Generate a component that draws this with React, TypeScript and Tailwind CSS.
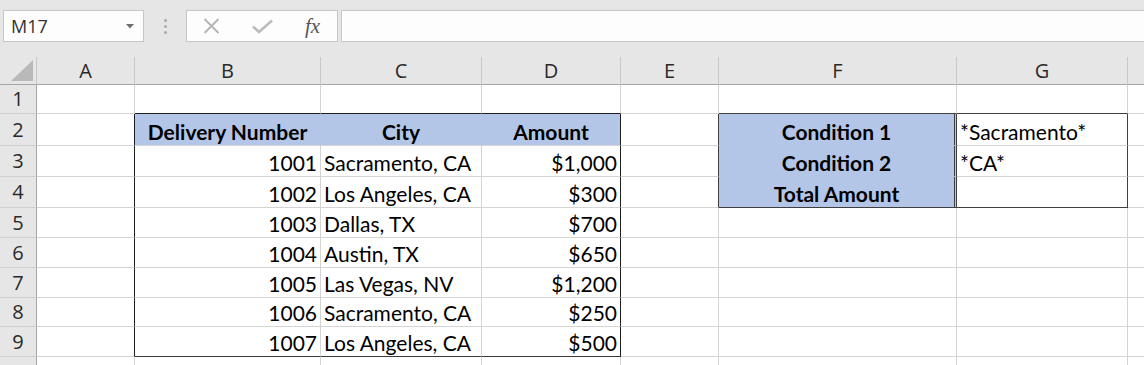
import React from 'react';

const COLW = ['w-[37px]', 'w-[98px]', 'w-[186px]', 'w-[161px]', 'w-[139px]', 'w-[98px]', 'w-[238px]', 'w-[171px]', 'w-[16px]'];
const ROWH = ['h-[29px]', 'h-[32px]', 'h-[31px]', 'h-[31px]', 'h-[30px]', 'h-[30px]', 'h-[30px]', 'h-[29px]', 'h-[30px]', 'h-[30px]'];
const LETTERS = ['A', 'B', 'C', 'D', 'E', 'F', 'G', ''];

type CellData = { t: string; a: 'l' | 'r' | 'c'; b?: boolean };

const deliveries: [string, string, string][] = [
  ['1001', 'Sacramento, CA', '$1,000'],
  ['1002', 'Los Angeles, CA', '$300'],
  ['1003', 'Dallas, TX', '$700'],
  ['1004', 'Austin, TX', '$650'],
  ['1005', 'Las Vegas, NV', '$1,200'],
  ['1006', 'Sacramento, CA', '$250'],
  ['1007', 'Los Angeles, CA', '$500'],
];

const data: Record<string, CellData> = {
  B2: { t: 'Delivery Number', a: 'c', b: true },
  C2: { t: 'City', a: 'c', b: true },
  D2: { t: 'Amount', a: 'c', b: true },
  F2: { t: 'Condition 1', a: 'c', b: true },
  G2: { t: '*Sacramento*', a: 'l' },
  F3: { t: 'Condition 2', a: 'c', b: true },
  G3: { t: '*CA*', a: 'l' },
  F4: { t: 'Total Amount', a: 'c', b: true },
};
deliveries.forEach(([n, city, amt], i) => {
  const r = i + 3;
  data[`B${r}`] = { t: n, a: 'r' };
  data[`C${r}`] = { t: city, a: 'l' };
  data[`D${r}`] = { t: amt, a: 'r' };
});

function rightClass(r: number, c: number): string {
  if (c === 1 && r >= 2 && r <= 9) return 'border-r border-r-[#1f1f1f]';
  if ((c === 2 || c === 3) && r === 2) return 'border-r border-r-[#b4c6e7]';
  if (c === 4 && r >= 2 && r <= 9) return 'border-r border-r-[#1f1f1f]';
  if (c === 5 && r >= 2 && r <= 4) return 'border-r border-r-[#3f3f3f]';
  if (c === 6 && r >= 2 && r <= 4) return 'border-r-[3px] border-double border-r-[#3f3f3f]';
  if (c === 7 && r >= 2 && r <= 4) return 'border-r border-r-[#3f3f3f]';
  if (c === 8) return 'border-r-0';
  return 'border-r border-r-[#d4d4d4]';
}

function bottomClass(r: number, c: number): string {
  if (c >= 2 && c <= 4 && r === 1) return 'border-b-[#1f1f1f]';
  if ((c === 6 || c === 7) && r === 1) return 'border-b-[#3f3f3f]';
  if (c === 6 && (r === 2 || r === 3)) return 'border-b-[#b4c6e7]';
  if ((c === 6 || c === 7) && r === 4) return 'border-b-[#3f3f3f]';
  if (c >= 2 && c <= 4 && r === 9) return 'border-b-[#3a3a3a]';
  return 'border-b-[#d4d4d4]';
}

function bgClass(r: number, c: number): string {
  if (r === 2 && c >= 2 && c <= 4) return 'bg-[#b4c6e7]';
  if (c === 6 && r >= 2 && r <= 4) return 'bg-[#b4c6e7]';
  return 'bg-white';
}

function alignClass(a: 'l' | 'r' | 'c'): string {
  if (a === 'l') return 'justify-start pl-[3px]';
  if (a === 'r') return 'justify-end pr-[3px]';
  return 'justify-center';
}

function Cell({ r, c }: { r: number; c: number }) {
  const key = `${LETTERS[c - 1]}${r}`;
  const d = data[key];
  return (
    <div
      className={`flex shrink-0 items-end overflow-hidden whitespace-nowrap border-b pb-[1px] ${COLW[c]} ${rightClass(r, c)} ${bottomClass(r, c)} ${bgClass(r, c)} ${d ? alignClass(d.a) : ''}`}
    >
      {d && <span className={`leading-[25px] text-black ${d.b ? 'font-bold' : 'font-normal'}`}>{d.t}</span>}
    </div>
  );
}

function TopBar() {
  return (
    <div className="flex h-[57px] items-start bg-[#e6e6e6] pt-[10px]">
      <div className="ml-[3px] flex h-[32px] w-[141px] shrink-0 items-center justify-between border border-[#c6c6c6] bg-[#fdfdfd] pl-[7px] pr-[9px]">
        <span className="font-['Open_Sans',sans-serif] text-[18px] leading-none text-[#333]">M17</span>
        <svg width="8" height="5" viewBox="0 0 8 5">
          <path d="M0 0 L8 0 L4 4.5 Z" fill="#6f6f6f" />
        </svg>
      </div>
      <div className="flex h-[32px] w-[42px] shrink-0 flex-col items-center justify-center gap-[3px]">
        <span className="h-[3px] w-[3px] rounded-full bg-[#a8a8a8]" />
        <span className="h-[3px] w-[3px] rounded-full bg-[#a8a8a8]" />
        <span className="h-[3px] w-[3px] rounded-full bg-[#a8a8a8]" />
      </div>
      <div className="flex h-[32px] w-[152px] shrink-0 items-center border border-[#c6c6c6] bg-[#fdfdfd]">
        <svg className="ml-[16px]" width="17" height="16" viewBox="0 0 17 16">
          <path d="M1.5 1 L15.5 15 M15.5 1 L1.5 15" stroke="#b3b3b3" strokeWidth="1.8" fill="none" />
        </svg>
        <svg className="ml-[32px]" width="21" height="15" viewBox="0 0 21 15">
          <path d="M1 7.5 L7 13 L20 1.5" stroke="#bcbcbc" strokeWidth="2.6" fill="none" />
        </svg>
        <span className="ml-[32px] font-['Liberation_Serif',serif] text-[21px] italic leading-none text-[#555]">fx</span>
      </div>
      <div className="ml-[3px] h-[32px] flex-1 border border-r-0 border-[#c6c6c6] bg-[#fdfdfd]" />
    </div>
  );
}

function HeaderRow() {
  return (
    <div className="flex h-[28px]">
      <div className={`relative shrink-0 border-r border-b border-r-[#c8c8c8] border-b-[#a6a6a6] bg-[#e6e6e6] ${COLW[0]}`}>
        <svg className="absolute left-[11px] top-[3px]" width="22" height="21" viewBox="0 0 22 21">
          <path d="M22 0 L22 21 L0 21 Z" fill="#b9b9b9" />
        </svg>
      </div>
      {LETTERS.map((l, i) => (
        <div
          key={i}
          className={`flex shrink-0 items-center justify-center border-b border-b-[#a6a6a6] bg-[#e6e6e6] font-['Open_Sans',sans-serif] text-[20px] text-[#2a2a2a] ${COLW[i + 1]} ${i < 7 ? 'border-r border-r-[#c8c8c8]' : ''}`}
        >
          {l}
        </div>
      ))}
    </div>
  );
}

export default function App() {
  const rows = [1, 2, 3, 4, 5, 6, 7, 8, 9, 10];
  return (
    <div className="h-[365px] w-[1144px] overflow-hidden bg-[#e6e6e6] font-['Lato',sans-serif] text-[21px]">
      <TopBar />
      <HeaderRow />
      {rows.map((r) => (
        <div key={r} className={`flex ${ROWH[r - 1]}`}>
          <div
            className={`flex shrink-0 items-center justify-center border-r border-b border-r-[#a6a6a6] border-b-[#d0d0d0] bg-[#e6e6e6] font-['Open_Sans',sans-serif] text-[20px] text-[#2a2a2a] ${COLW[0]}`}
          >
            {r}
          </div>
          {[1, 2, 3, 4, 5, 6, 7, 8].map((c) => (
            <Cell key={c} r={r} c={c} />
          ))}
        </div>
      ))}
    </div>
  );
}
